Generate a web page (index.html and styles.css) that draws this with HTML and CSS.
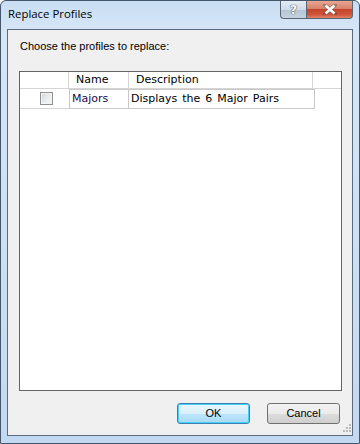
FILE: index.html
```html
<!DOCTYPE html>
<html>
<head>
<meta charset="utf-8">
<link rel="stylesheet" href="styles.css">
</head>
<body>
<div class="window">
  <div class="titlebar">
    <div class="title">Replace Profiles</div>
    <div class="caption-buttons">
      <div class="cap-btn help">?</div>
      <div class="cap-btn close">
        <svg width="14" height="11" viewBox="0 0 14 11"><path d="M2 1 L12 10 M12 1 L2 10" stroke="#3a3a3a" stroke-width="4" stroke-linecap="square" fill="none" opacity="0.35"/><path d="M2.5 1.5 L11.5 9.5 M11.5 1.5 L2.5 9.5" stroke="#ffffff" stroke-width="2.6" fill="none"/></svg>
      </div>
    </div>
  </div>
  <div class="client">
    <div class="label">Choose the profiles to replace:</div>
    <div class="list">
      <div class="header">
        <div class="hcell c1"></div>
        <div class="hcell c2">Name</div>
        <div class="hcell c3">Description</div>
        <div class="hcell c4"></div>
      </div>
      <div class="row">
        <div class="cell c1"><span class="check"></span></div>
        <div class="cell c2 name">Majors</div>
        <div class="cell c3 desc">Displays the 6 Major Pairs</div>
      </div>
    </div>
    <div class="buttons">
      <div class="btn default">OK</div>
      <div class="btn">Cancel</div>
    </div>
    <div class="grip">
      <svg width="12" height="12" viewBox="0 0 12 12">
        <g fill="#b8b8b8">
          <rect x="9" y="1" width="2" height="2"/>
          <rect x="6" y="4" width="2" height="2"/><rect x="9" y="4" width="2" height="2"/>
          <rect x="3" y="7" width="2" height="2"/><rect x="6" y="7" width="2" height="2"/><rect x="9" y="7" width="2" height="2"/>
        </g>
      </svg>
    </div>
  </div>
</div>
</body>
</html>
```
FILE: styles.css
```css
html, body {
  margin: 0;
  padding: 0;
  background: #ffffff;
}
.window {
  width: 360px;
  height: 444px;
  box-sizing: border-box;
  border: 1px solid #46566a;
  border-radius: 6px 6px 0 0;
  background: linear-gradient(180deg, #c9def3 0px, #d6e6f7 30px, #c3d9f1 100%);
  display: flex;
  flex-direction: column;
  padding: 0 6px 7px 6px;
}
.titlebar {
  height: 28px;
  display: flex;
  align-items: flex-start;
  justify-content: space-between;
  flex-shrink: 0;
}
.title {
  font-family: "Open Sans", "Noto Sans", sans-serif;
  font-size: 11.4px;
  color: #000;
  padding-left: 1px;
  padding-top: 5px;
  line-height: 16px;
}
.caption-buttons {
  display: flex;
  margin-right: 0;
}
.cap-btn {
  height: 18px;
  box-sizing: border-box;
  border: 1px solid #5a6573;
  border-top: none;
  display: flex;
  align-items: center;
  justify-content: center;
}
.help {
  width: 26px;
  border-radius: 0 0 0 4px;
  border-right: none;
  background: linear-gradient(180deg, #e4edf6 0%, #d0dcea 50%, #b6c5d6 51%, #c4d3e2 100%);
  font-family: "DejaVu Sans", sans-serif;
  font-weight: bold;
  font-size: 13px;
  color: #fff;
  text-shadow: 0 0 1px #333, 0 0 1px #333;
}
.close {
  width: 47px;
  border-radius: 0 0 4px 0;
  background: linear-gradient(180deg, #e7a792 0%, #d9826a 45%, #c4442b 50%, #d0553a 80%, #e0836a 100%);
}
.client {
  flex: 1;
  border: 1px solid #5c6b7c;
  background: #f0f0f0;
  display: flex;
  flex-direction: column;
  padding: 10px 10px 11px 11px;
  position: relative;
}
.label {
  font-family: "Liberation Sans", Arial, sans-serif;
  font-size: 11px;
  line-height: 13px;
  padding-left: 1px;
  color: #000;
}
.list {
  margin-top: 18px;
  width: 323px;
  height: 320px;
  box-sizing: border-box;
  border: 1px solid #646464;
  background: #ffffff;
  font-family: "DejaVu Sans", Verdana, sans-serif;
  font-size: 11px;
  word-spacing: 1.5px;
}
.header {
  display: flex;
  height: 17px;
  border-bottom: 1px solid #d5d5d5;
  box-sizing: border-box;
  background: #ffffff;
}
.hcell {
  box-sizing: border-box;
  border-right: 1px solid #d5d5d5;
  line-height: 16px;
  color: #000;
  padding-left: 7px;
}
.c1 { width: 49px; }
.c2 { width: 60px; }
.c3 { width: 184px; }
.hcell.c4 { flex: 1; border-right: none; }
.row {
  display: flex;
  height: 20px;
}
.cell {
  box-sizing: border-box;
  line-height: 18px;
}
.cell.c1 {
  display: flex;
  align-items: center;
  justify-content: center;
  padding-left: 3px;
  border-bottom: 1px solid #d5d5d5;
}
.cell.c2, .cell.c3 {
  border: 1px solid #c8c8c8;
  padding-left: 2px;
}
.cell.c3 {
  border-left: none;
  width: 186px;
}
.name { color: #1c0a50; }
.desc { color: #000; }
.check {
  width: 13px;
  height: 13px;
  box-sizing: border-box;
  border: 1px solid #8e8f8f;
  background: linear-gradient(135deg, #d4d6da 0%, #eceef0 60%, #f8f8f8 100%);
  box-shadow: inset 0 0 0 1px #f4f4f4;
  display: block;
}
.buttons {
  margin-top: 12px;
  display: flex;
  justify-content: flex-end;
  gap: 17px;
  padding-right: 2px;
}
.btn {
  width: 73px;
  height: 21px;
  box-sizing: border-box;
  border: 1px solid #707070;
  border-radius: 3px;
  background: linear-gradient(180deg, #f2f2f2 0%, #ebebeb 50%, #dddddd 51%, #cfcfcf 100%);
  font-family: "Liberation Sans", Arial, sans-serif;
  font-size: 11px;
  line-height: 19px;
  text-align: center;
  color: #000;
}
.btn.default {
  border-color: #3c7fb1;
  background: linear-gradient(180deg, #eaf6fd 0%, #d9f0fc 50%, #bee6fd 51%, #a7d9f5 100%);
  box-shadow: inset 0 0 0 1px #48d0fc;
}
.grip {
  position: absolute;
  right: 0;
  bottom: 0;
  width: 12px;
  height: 12px;
  line-height: 0;
}
```
